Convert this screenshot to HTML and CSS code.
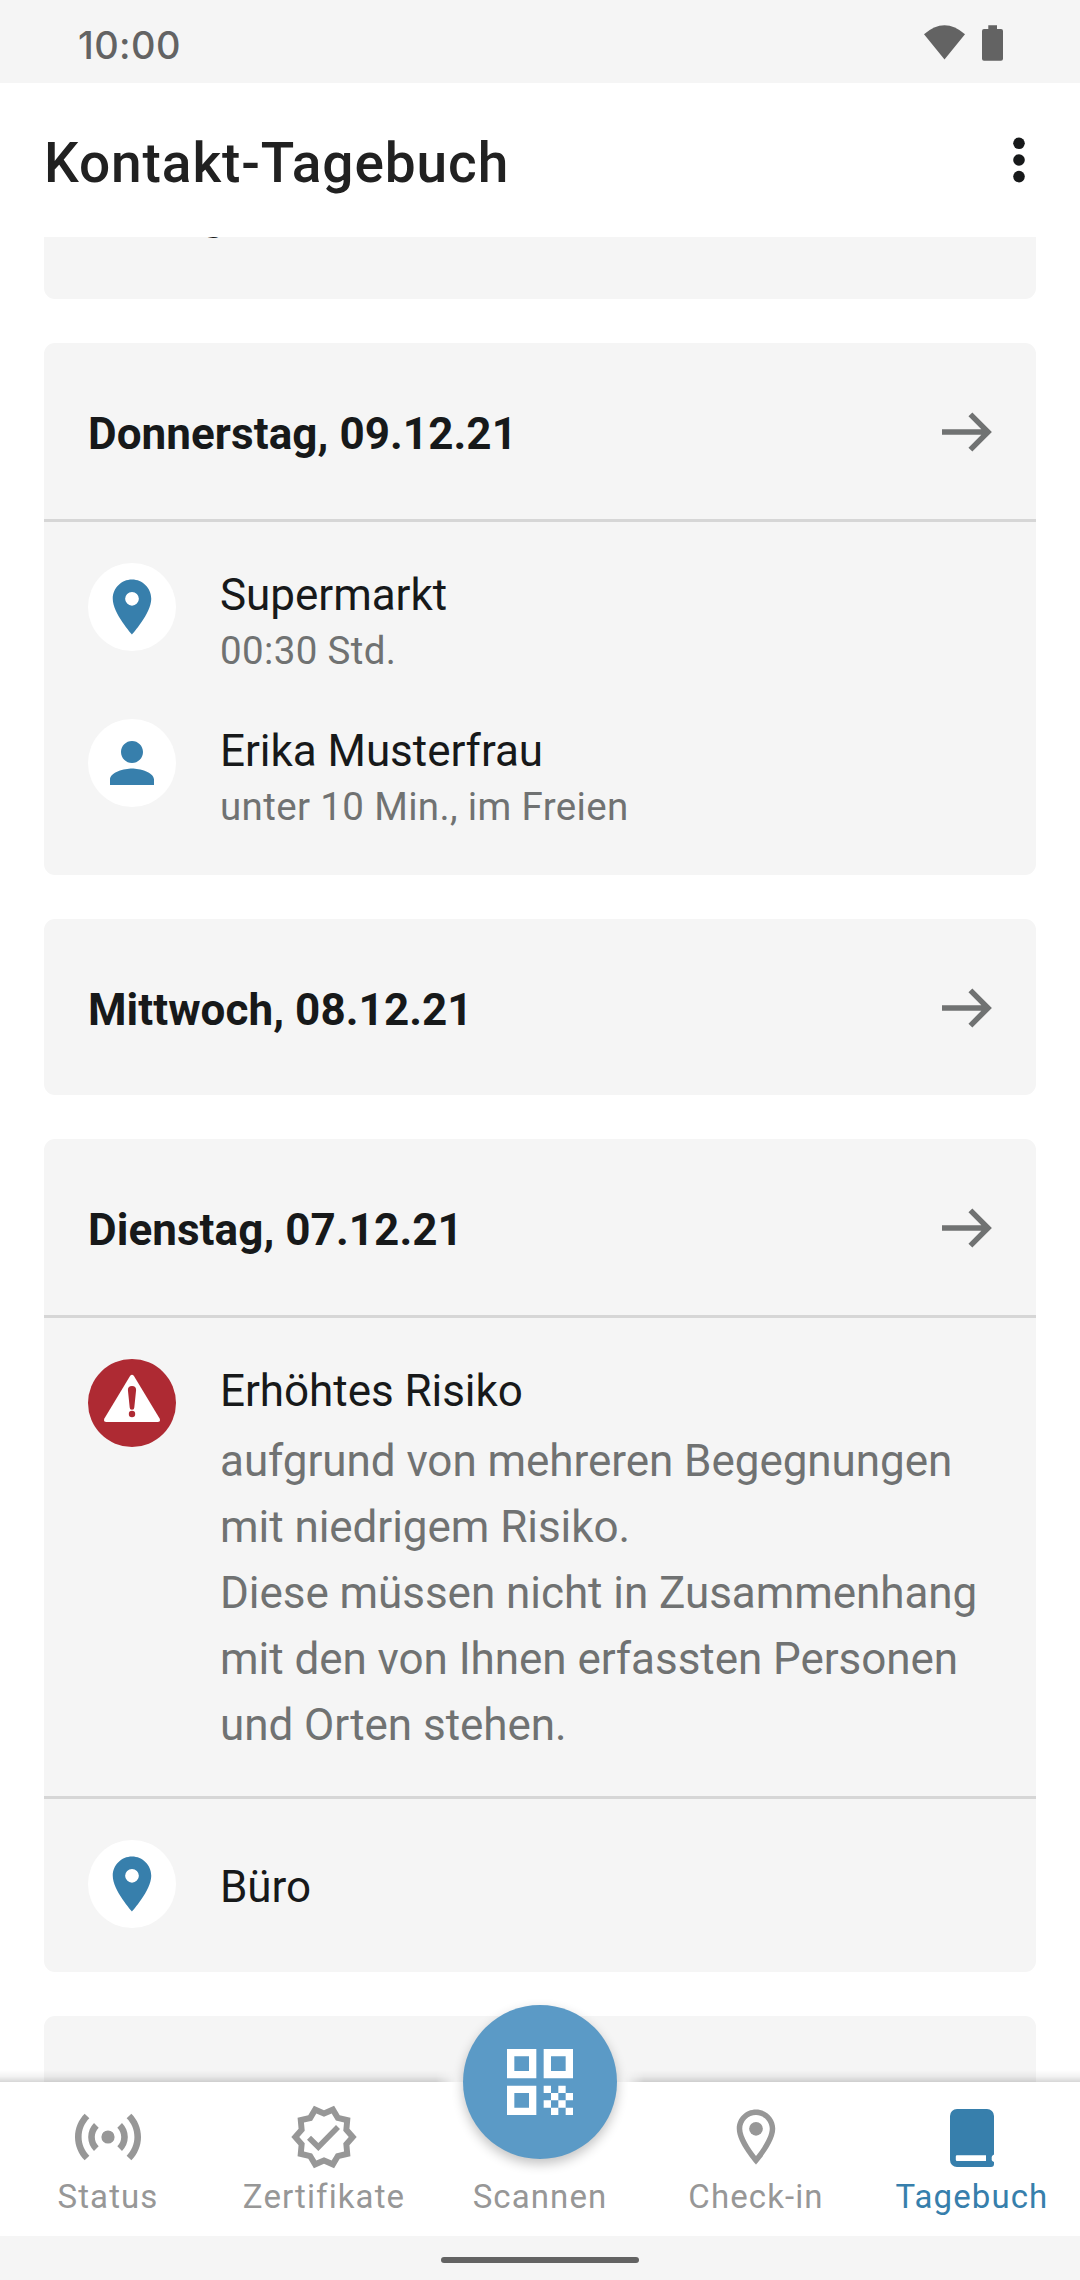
FILE: index.html
```html
<!DOCTYPE html>
<html lang="de">
<head>
<meta charset="utf-8">
<title>Kontakt-Tagebuch</title>
<link rel="stylesheet" href="styles.css">
</head>
<body>
<svg class="sprite" aria-hidden="true">
  <symbol id="arrow" viewBox="0 0 50 44"><path d="M0 22H46M28.4 4.4L46 22L28.4 39.6" fill="none" stroke="currentColor" stroke-width="5.5"/></symbol>
  <symbol id="place" viewBox="0 0 24 24"><path fill="currentColor" d="M12 2C8.13 2 5 5.13 5 9c0 5.25 7 13 7 13s7-7.75 7-13c0-3.87-3.13-7-7-7zm0 9.5a2.5 2.5 0 0 1 0-5 2.5 2.5 0 0 1 0 5z"/></symbol>
  <symbol id="person" viewBox="0 0 24 24"><path fill="currentColor" d="M12 12c2.21 0 4-1.79 4-4s-1.79-4-4-4-4 1.79-4 4 1.79 4 4 4zm0 2c-2.67 0-8 1.34-8 4v2h16v-2c0-2.66-5.33-4-8-4z"/></symbol>
</svg>
<div class="screen">
  <header class="status-bar">
    <span class="clock">10:00</span>
    <svg class="status-icons" viewBox="0 0 79 36">
      <path d="M0 9.3Q20.5 -8.7 41 9.3L20.5 34.5Z"/>
      <path d="M58 6a2 2 0 0 1 2-2h4.3V.3H73V4h4a2 2 0 0 1 2 2v27.700a2 2 0 0 1-2 2H60a2 2 0 0 1-2-2z"/>
    </svg>
  </header>
  <div class="toolbar">
    <h1>Kontakt-Tagebuch</h1>
    <svg class="more" viewBox="0 0 12 46"><circle cx="6" cy="6.300" r="5.800"/><circle cx="6" cy="23" r="5.800"/><circle cx="6" cy="39.600" r="5.800"/></svg>
  </div>
  <main class="list">
    <section class="card">
      <div class="card-head"><h2>Freitag, 10.12.21</h2><svg class="arrow"><use href="#arrow"/></svg></div>
    </section>
    <section class="card">
      <div class="card-head"><h2>Donnerstag, 09.12.21</h2><svg class="arrow"><use href="#arrow"/></svg></div>
      <div class="entries">
        <div class="entry"><span class="badge"><svg><use href="#place"/></svg></span><div class="text"><h3>Supermarkt</h3><p>00:30 Std.</p></div></div>
        <div class="entry"><span class="badge"><svg><use href="#person"/></svg></span><div class="text"><h3>Erika Musterfrau</h3><p>unter 10 Min., im Freien</p></div></div>
      </div>
    </section>
    <section class="card">
      <div class="card-head"><h2>Mittwoch, 08.12.21</h2><svg class="arrow"><use href="#arrow"/></svg></div>
    </section>
    <section class="card">
      <div class="card-head"><h2>Dienstag, 07.12.21</h2><svg class="arrow"><use href="#arrow"/></svg></div>
      <div class="entries risk">
        <div class="entry">
          <span class="badge high"><svg viewBox="0 0 66 66"><path fill="#fff" d="M31.200 5.800Q33 3.600 34.800 5.800L60.600 48.500Q62 52 58.500 52H7.500Q4 52 5.400 48.500Z"/><path fill="#ae2a33" d="M28.900 20a4.100 4.100 0 0 1 8.200 0L35.300 37.500a2.300 2.300 0 0 1-4.600 0z"/><circle cx="33" cy="44" r="3.200" fill="#ae2a33"/></svg></span>
          <div class="text"><h3>Erhöhtes Risiko</h3><p>aufgrund von mehreren Begegnungen<br>mit niedrigem Risiko.<br>Diese müssen nicht in Zusammenhang<br>mit den von Ihnen erfassten Personen<br>und Orten stehen.</p></div>
        </div>
      </div>
      <div class="entries single">
        <div class="entry"><span class="badge"><svg><use href="#place"/></svg></span><div class="text"><h3>Büro</h3></div></div>
      </div>
    </section>
    <section class="card">
      <div class="card-head"></div>
    </section>
  </main>
  <nav class="nav">
    <a class="tab"><svg class="sensors" viewBox="-.12 -.12 24.240 24.240"><path d="M7.760 16.240C6.670 15.160 6 13.660 6 12s.67-3.160 1.760-4.240l1.420 1.420C8.450 9.900 8 10.900 8 12c0 1.100.45 2.100 1.170 2.830zM16.240 16.240C17.330 15.160 18 13.660 18 12s-.67-3.160-1.760-4.240l-1.420 1.420C15.550 9.900 16 10.900 16 12c0 1.100-.45 2.100-1.170 2.830zM12 10a2 2 0 0 0 0 4 2 2 0 0 0 0-4zM20 12c0 2.210-.9 4.210-2.350 5.650l1.420 1.420C20.880 17.260 22 14.760 22 12s-1.120-5.260-2.930-7.070l-1.420 1.420C19.100 7.790 20 9.790 20 12zM6.350 6.350L4.930 4.930C3.120 6.740 2 9.240 2 12s1.120 5.260 2.930 7.070l1.420-1.420C4.900 16.210 4 14.210 4 12s.9-4.210 2.350-5.650z"/></svg><span>Status</span></a>
    <a class="tab"><svg class="verified" viewBox="-.12 -.12 24.240 24.240"><path d="M23 12l-2.440-2.790.34-3.690-3.610-.82-1.890-3.200L12 2.960 8.600 1.500 6.710 4.690 3.100 5.500l.34 3.700L1 12l2.440 2.790-.34 3.700 3.610.82L8.600 22.500l3.400-1.470 3.400 1.460 1.890-3.190 3.610-.82-.34-3.690L23 12zm-4.510 2.110l.26 2.790-2.740.62-1.430 2.410L12 18.820l-2.580 1.110-1.430-2.410-2.740-.62.26-2.800L3.660 12l1.850-2.120-.26-2.780 2.740-.61 1.430-2.410L12 5.180l2.580-1.110 1.430 2.410 2.740.62-.26 2.790L20.340 12l-1.850 2.110z"/><path d="M6.280 12.950L7.630 11.600L10.100 14.050L16.040 7.960L17.380 9.320L10.100 16.700Z"/></svg><span>Zertifikate</span></a>
    <a class="tab"><span>Scannen</span></a>
    <a class="tab"><svg class="checkin" viewBox="0 0 24 24"><path d="M12 2C8.130 2 5 5.130 5 9c0 5.250 7 13 7 13s7-7.750 7-13c0-3.870-3.130-7-7-7zM7 9c0-2.760 2.240-5 5-5s5 2.240 5 5c0 2.880-2.880 7.190-5 9.880C9.920 16.210 7 11.850 7 9z"/><circle cx="12" cy="9" r="2.500"/></svg><span>Check-in</span></a>
    <a class="tab active"><svg class="book" viewBox="0 0 44 58"><path fill-rule="evenodd" d="M7 0H37a7 7 0 0 1 7 7V45.500q-2.300 1-2.300 2.500v3q0 1.200 2.300 2v2q0 3-3 3H7a7 7 0 0 1-7-7V7a7 7 0 0 1 7-7zM7 46.200q-1.200 0-1.200 1.200v3.400q0 1.200 1.200 1.200H36v-5.800z"/></svg><span>Tagebuch</span></a>
    <button class="fab" aria-label="Scannen"><svg viewBox="0 0 18 18"><path fill="#fff" fill-rule="evenodd" d="M0 0h8v8H0zM2 2v4h4V2zM10 0h8v8h-8zM12 2v4h4V2zM0 10h8v8H0zM2 12v4h4v-4zM10 10h2v2h-2zM14 10h2v2h-2zM12 12h2v2h-2zM16 12h2v2h-2zM10 14h2v2h-2zM14 14h2v2h-2zM12 16h2v2h-2zM16 16h2v2h-2z"/></svg></button>
  </nav>
  <footer class="gesture"><span></span></footer>
</div>
</body>
</html>
```
FILE: styles.css
```css
* { box-sizing: border-box; }
body { margin: 0; background: #fff; font-family: Roboto, "Liberation Sans", sans-serif; color: #17191a; }
h1, h2, h3, p { margin: 0; }
.sprite { position: absolute; width: 0; height: 0; }
.screen { display: flex; flex-direction: column; width: 1080px; height: 2280px; overflow: hidden; }

.status-bar { flex: none; height: 83px; padding: 25px 77px 0 78px; background: #f5f5f5; display: flex; justify-content: space-between; align-items: flex-start; }
.clock { font: 500 38px/40px Inter, sans-serif; letter-spacing: .4px; color: #636363; }
.status-icons { width: 79px; height: 36px; fill: #636363; }

.toolbar { flex: none; height: 154px; padding: 0 55px 0 44px; display: flex; align-items: center; justify-content: space-between; }
h1 { font-size: 55px; line-height: 66px; font-weight: 500; letter-spacing: .92px; color: #212121; padding-top: 6px; }
.more { width: 12px; height: 46px; fill: #17191a; }

.list { flex: 1; min-height: 0; overflow: hidden; padding: 0 44px; display: flex; flex-direction: column; justify-content: flex-start; gap: 44px; }
.card { flex: none; background: #f5f5f5; border-radius: 11px; }
.card:first-child { margin-top: -114px; }
.card-head { height: 176px; padding: 0 44px; display: flex; align-items: center; justify-content: space-between; }
h2 { font-size: 44px; line-height: 52px; font-weight: 700; letter-spacing: .07px; padding-top: 5px; }
.arrow { width: 50px; height: 44px; margin-top: 1px; color: #707272; }
.entries { border-top: 3px solid #d6d6d6; padding: 41px 44px 44px; display: flex; flex-direction: column; gap: 44px; }
.entry { display: flex; align-items: flex-start; gap: 44px; min-height: 112px; }
.badge { flex: none; width: 88px; height: 88px; border-radius: 50%; background: #fff; color: #377fac; display: flex; align-items: center; justify-content: center; }
.badge svg { width: 66px; height: 66px; }
.badge.high { background: #ae2a33; }
.text { padding-top: 6px; }
h3 { font-size: 44px; line-height: 52px; font-weight: 400; letter-spacing: -.04px; }
p { margin-top: 7px; font-size: 38.5px; line-height: 45px; letter-spacing: .36px; color: #707272; white-space: nowrap; }
.risk { padding-bottom: 38px; }
.risk p { margin-top: 11px; font-size: 44px; line-height: 66px; letter-spacing: -.05px; }
.single .entry { min-height: 88px; align-items: center; }

.nav { flex: none; position: relative; height: 154px; background: #fff; display: grid; grid-template-columns: repeat(5, 1fr); }
.nav::before { content: ""; position: absolute; left: 0; right: 0; top: -12px; height: 12px; background: linear-gradient(to top, rgba(0,0,0,.16), rgba(0,0,0,.05) 45%, transparent); -webkit-mask: linear-gradient(to right, #000 436px, transparent 456px, transparent 624px, #000 644px); mask: linear-gradient(to right, #000 436px, transparent 456px, transparent 624px, #000 644px); }
.tab { display: grid; grid-template-rows: 110px 44px; justify-items: center; align-items: center; color: #979797; fill: currentColor; }
.tab span { grid-row: 2; font-size: 33px; line-height: 40px; letter-spacing: 1.1px; align-self: start; margin-top: -15px; }
.tab svg { grid-row: 1; }
.sensors { width: 80px; height: 80px; }
.verified { width: 72px; height: 72px; }
.checkin { width: 66px; height: 66px; }
.book { width: 44px; height: 58px; margin-top: 2px; }
.active { color: #377fac; }
.fab { position: absolute; left: 463px; top: -77px; width: 154px; height: 154px; padding: 0; border: 0; border-radius: 50%; background: #5b9ac6; box-shadow: 0 5px 12px rgba(0,0,0,.24); display: flex; align-items: center; justify-content: center; }
.fab svg { width: 66px; height: 66px; }
.gesture { flex: none; height: 44px; background: #f5f5f5; display: flex; justify-content: center; align-items: center; padding-top: 4px; }
.gesture span { width: 198px; height: 6px; border-radius: 3px; background: #636363; }
```
